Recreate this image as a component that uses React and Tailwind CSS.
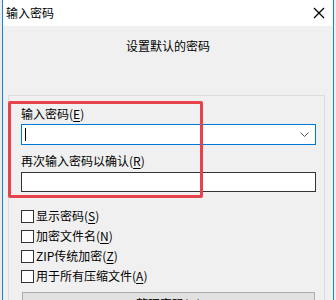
import React from "react";

const options = [
  { label: "显示密码", key: "S" },
  { label: "加密文件名", key: "N" },
  { label: "ZIP传统加密", key: "Z" },
  { label: "用于所有压缩文件", key: "A" },
];

const Hotkey = ({ k }) => (
  <span>
    (<span className="underline underline-offset-2">{k}</span>)
  </span>
);

const App = () => {
  return (
    <div
      className="relative flex w-[336px] h-[300px] overflow-hidden bg-white text-[12px] leading-[16px] text-black"
      style={{ fontFamily: '"Noto Sans CJK SC", "Noto Sans", sans-serif' }}
    >
      <div className="w-[2px] shrink-0 bg-[#ececec]" />
      <div className="flex w-[332px] shrink-0 flex-col border-x border-[#1883d7]">
        {/* title bar */}
        <div className="flex h-[26px] shrink-0 items-center justify-between bg-white pl-[3px] pr-[8px]">
          <span>输入密码</span>
          <svg width="12" height="12" viewBox="0 0 12 12">
            <path d="M1 1 L11 11 M11 1 L1 11" stroke="#000" strokeWidth="1.3" />
          </svg>
        </div>

        {/* body */}
        <div className="flex-1 bg-[#f0f0f0] pt-[12px]">
          <div className="text-center">设置默认的密码</div>

          <div className="ml-[5px] mr-[8px] mt-[41px] border border-[#dcdcdc] pl-[12px] pt-[10px] pb-4">
            <div>
              输入密码<Hotkey k="E" />
            </div>
            <div className="mt-[2px] flex h-[21px] w-[295px] items-center justify-between border border-[#0078d7] bg-white pl-[3px] pr-[6px]">
              <div className="h-[13px] w-px bg-black" />
              <svg width="9" height="6" viewBox="0 0 9 6">
                <path d="M0.5 0.5 L4.5 4.5 L8.5 0.5" fill="none" stroke="#555" strokeWidth="1" />
              </svg>
            </div>

            <div className="mt-[8px]">
              再次输入密码以确认<Hotkey k="R" />
            </div>
            <div className="mt-[3px] h-[20px] w-[295px] border border-[#333] bg-white" />

            <div className="mt-[14px] flex flex-col">
              {options.map((o) => (
                <div key={o.key} className="flex h-[20px] items-center gap-[2px]">
                  <div className="h-[13px] w-[13px] border border-[#333] bg-white" />
                  <span>
                    {o.label}
                    <Hotkey k={o.key} />
                  </span>
                </div>
              ))}
            </div>

            <div className="mt-[6px] ml-[1px] flex h-[23px] w-[293px] items-center justify-center border border-[#adadad] bg-[#e1e1e1]">
              整理密码(<span className="underline underline-offset-2">O</span>)
            </div>
          </div>
        </div>
      </div>
      <div className="w-[2px] shrink-0 bg-[#f4ece8]" />

      {/* red annotation */}
      <div className="absolute left-[8px] top-[101px] h-[97px] w-[195px] rounded-[2px] border-[3px] border-[#e8434c]" />
    </div>
  );
};

export default App;
